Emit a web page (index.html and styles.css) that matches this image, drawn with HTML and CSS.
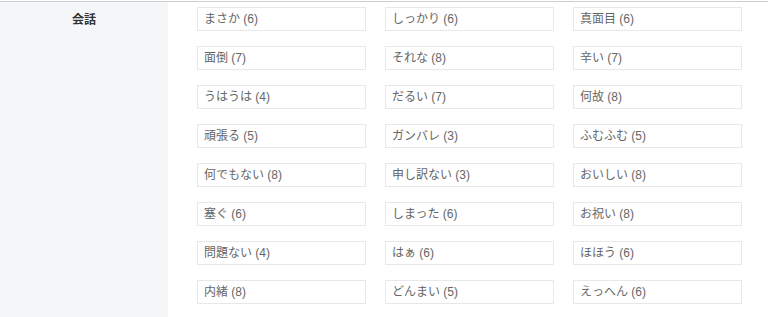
FILE: index.html
```html
<!DOCTYPE html>
<html lang="ja">
<head>
<meta charset="utf-8">
<title>会話</title>
<link rel="stylesheet" href="styles.css">
</head>
<body>
<div class="table">
  <div class="row">
    <div class="head">会話</div>
    <div class="cell">
      <div class="grid">
        <div class="tag">まさか (6)</div>
        <div class="tag">しっかり (6)</div>
        <div class="tag">真面目 (6)</div>
        <div class="tag">面倒 (7)</div>
        <div class="tag">それな (8)</div>
        <div class="tag">辛い (7)</div>
        <div class="tag">うはうは (4)</div>
        <div class="tag">だるい (7)</div>
        <div class="tag">何故 (8)</div>
        <div class="tag">頑張る (5)</div>
        <div class="tag">ガンバレ (3)</div>
        <div class="tag">ふむふむ (5)</div>
        <div class="tag">何でもない (8)</div>
        <div class="tag">申し訳ない (3)</div>
        <div class="tag">おいしい (8)</div>
        <div class="tag">塞ぐ (6)</div>
        <div class="tag">しまった (6)</div>
        <div class="tag">お祝い (8)</div>
        <div class="tag">問題ない (4)</div>
        <div class="tag">はぁ (6)</div>
        <div class="tag">ほほう (6)</div>
        <div class="tag">内緒 (8)</div>
        <div class="tag">どんまい (5)</div>
        <div class="tag">えっへん (6)</div>
      </div>
    </div>
  </div>
</div>
</body>
</html>
```

FILE: styles.css
```css
html, body {
  margin: 0;
  padding: 0;
  background: #fff;
}
body {
  font-family: "Liberation Sans", "Noto Sans CJK JP", sans-serif;
  font-size: 12px;
  color: #666;
  padding-top: 1px;
}
.table {
  border-top: 1px solid #cfcfcf;
}
.row {
  display: flex;
  min-height: 315px;
}
.head {
  width: 168px;
  flex: none;
  background: #f5f6f8;
  text-align: center;
  font-weight: bold;
  color: #333;
  padding-top: 10px;
  line-height: 16px;
  box-sizing: border-box;
}
.cell {
  padding: 5px 0 0 29px;
}
.grid {
  display: grid;
  grid-template-columns: repeat(3, 169px);
  column-gap: 19px;
  row-gap: 15px;
}
.tag {
  height: 24px;
  box-sizing: border-box;
  border: 1px solid #e8e8e8;
  padding: 0 6px;
  line-height: 22px;
  white-space: nowrap;
}
```
